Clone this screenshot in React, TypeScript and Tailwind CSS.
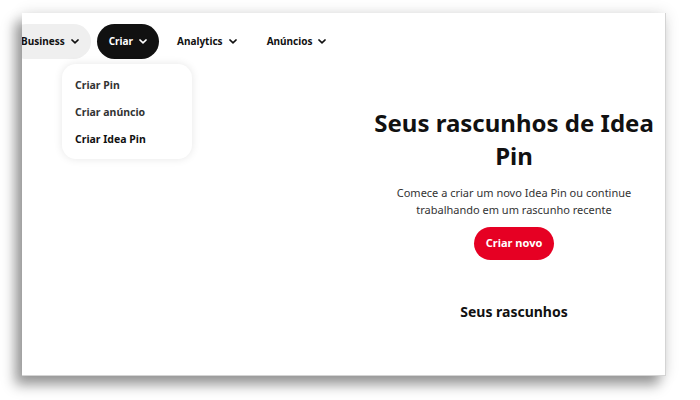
import React from "react";

const Chevron = ({ color = "#111" }: { color?: string }) => (
  <svg width="8" height="5" viewBox="0 0 8 5" fill="none">
    <path d="M0.9 0.9 L4 3.9 L7.1 0.9" stroke={color} strokeWidth="1.5" strokeLinecap="round" strokeLinejoin="round" />
  </svg>
);

export default function App() {
  const font = { fontFamily: '"Noto Sans", "Open Sans", sans-serif' };
  return (
    <div className="w-[700px] h-[400px] bg-white overflow-hidden" style={font}>
      <div className="ml-[22px] mt-[13px] w-[644px] h-[363px] bg-white relative overflow-hidden border-r border-b border-[#d4d4d4] shadow-[-7px_9px_12px_rgba(0,0,0,0.38),0_0_14px_rgba(0,0,0,0.12)]">
        {/* Nav */}
        <div className="flex items-center gap-[6px] mt-[11px] -ml-[13px]">
          <div className="h-[35px] px-3 rounded-full bg-[#efefef] flex items-center gap-[6px] text-[10px] font-bold text-[#111]">
            <span>Business</span>
            <Chevron />
          </div>
          <div className="h-[35px] px-3 rounded-full bg-[#111] flex items-center gap-[6px] text-[10px] font-bold text-white">
            <span>Criar</span>
            <Chevron color="#fff" />
          </div>
          <div className="h-[35px] px-3 rounded-full flex items-center gap-[6px] text-[10px] font-bold text-[#111]">
            <span>Analytics</span>
            <Chevron />
          </div>
          <div className="h-[35px] px-3 rounded-full flex items-center gap-[6px] text-[10px] font-bold text-[#111]">
            <span>Anúncios</span>
            <Chevron />
          </div>
        </div>

        {/* Dropdown */}
        <div className="absolute left-[40px] top-[51px] w-[130px] h-[95px] bg-white rounded-[14px] shadow-[0_0_8px_rgba(0,0,0,0.1)] flex flex-col pl-[13px] pt-[13px] gap-[10px] text-[10.5px] font-bold">
          <div className="h-[17px] leading-[17px] text-[#333]">Criar Pin</div>
          <div className="h-[17px] leading-[17px] text-[#333]">Criar anúncio</div>
          <div className="h-[17px] leading-[17px] text-[#111]">Criar Idea Pin</div>
        </div>

        {/* Main column */}
        <div className="ml-[340px] w-[304px] mt-[47px] flex flex-col items-center text-center">
          <h1 className="text-[24px] leading-[33px] font-bold text-[#111]">Seus rascunhos de Idea Pin</h1>
          <p className="mt-[12px] text-[11px] leading-[17px] text-[#333]">
            Comece a criar um novo Idea Pin ou continue
            <br />
            trabalhando em um rascunho recente
          </p>
          <button className="mt-[9px] h-[33px] px-[12px] rounded-full bg-[#e60023] text-white text-[11px] font-bold">
            Criar novo
          </button>
          <div className="mt-[41px] text-[14px] font-bold text-[#111]">Seus rascunhos</div>
        </div>
      </div>
    </div>
  );
}
